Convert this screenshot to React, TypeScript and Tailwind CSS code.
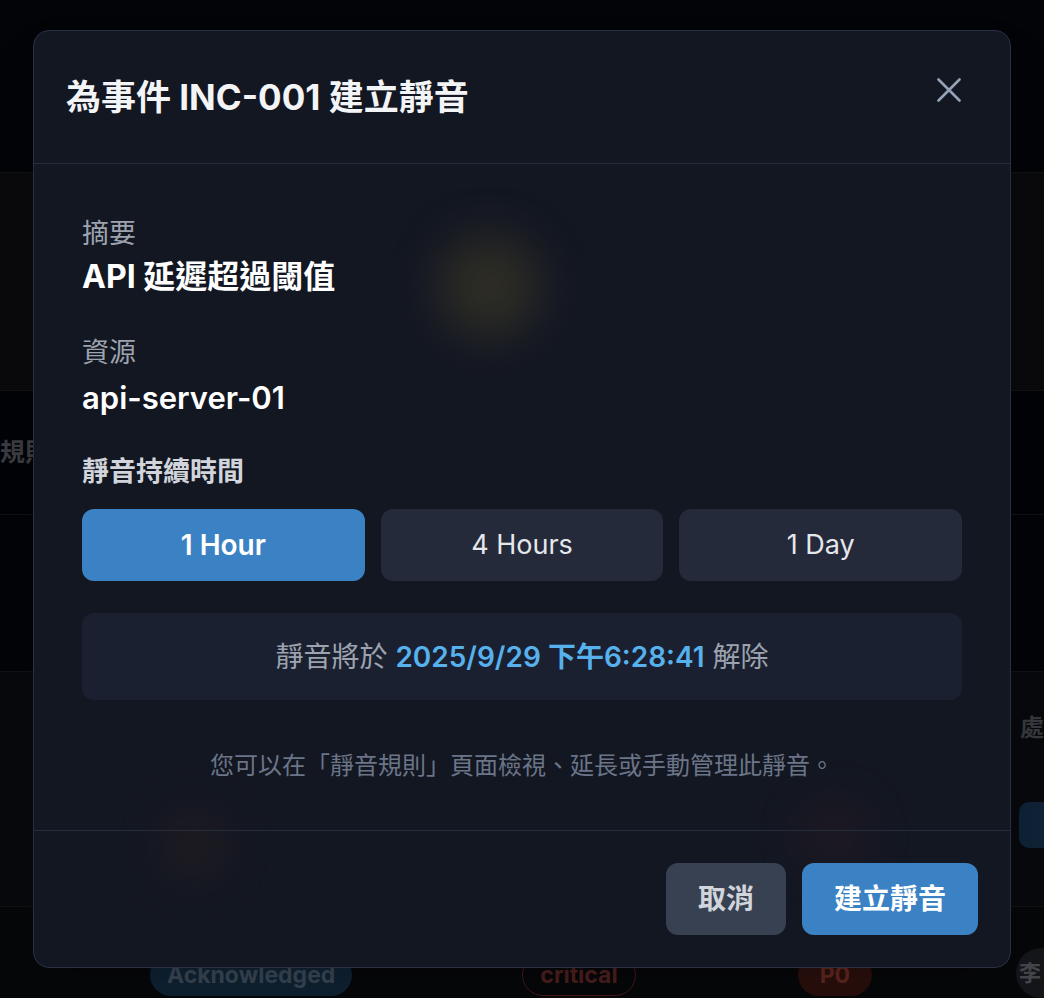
import { useState } from 'react';

const FONT = { fontFamily: 'Inter, "Noto Sans CJK TC", "Noto Sans", sans-serif' };

const DURATIONS = ['1 Hour', '4 Hours', '1 Day'];

function CloseIcon() {
  return (
    <svg width="24" height="24" viewBox="0 0 24 24" fill="none" aria-hidden>
      <path d="M1.5 1.5L22.5 22.5M22.5 1.5L1.5 22.5" stroke="#94a3b8" strokeWidth="2.6" strokeLinecap="round" />
    </svg>
  );
}

// faded table sitting behind the dialog
function BackdropPage() {
  return (
    <div className="flex h-full flex-col">
      <div className="h-[172px] bg-[#030408]" />
      <div className="h-[218px] border-t border-[#111216] bg-[#0a0a0d]" />
      <div className="flex h-[125px] items-center border-t border-[#111216] bg-[#020306]">
        <span className="text-[25px] font-bold text-[#3a3c41]">規則</span>
      </div>
      <div className="h-[157px] border-t border-[#111216] bg-[#030408]" />
      <div className="flex h-[235px] flex-col items-end border-t border-[#111216] bg-[#08090c]">
        <span className="mt-[38px] text-[24px] font-bold text-[#36383d]">處</span>
        <div className="mt-[56px] h-[46px] w-[25px] rounded-l-[10px] bg-[#0f2236]" />
      </div>
      <div className="flex flex-1 items-start border-t border-[#111216] bg-[#060709] pt-[47px]">
        <span className="ml-[150px] rounded-full bg-[#0f2233] px-[17px] py-[4px] text-[23px] leading-[34px] font-bold text-[#3a4756]">
          Acknowledged
        </span>
        <span className="ml-[170px] rounded-full border border-[#45191a] px-[17px] py-[3px] text-[23px] leading-[34px] font-bold text-[#4e1f1e]">
          critical
        </span>
        <span className="ml-[162px] rounded-full bg-[#2a0f0c] px-[22px] py-[4px] text-[23px] leading-[34px] font-bold text-[#62271f]">
          P0
        </span>
        <span className="-mt-[6px] ml-auto -mr-[22px] flex h-[50px] w-[50px] items-center justify-center rounded-full bg-[#15161a] pr-[22px] text-[22px] font-bold text-[#45464b]">
          李
        </span>
      </div>
    </div>
  );
}

export default function App() {
  const [duration, setDuration] = useState('1 Hour');

  return (
    <div className="relative h-[998px] w-full overflow-hidden bg-[#030408]" style={FONT}>
      <BackdropPage />

      <div className="absolute inset-0 flex items-center justify-center">
        <div className="relative w-[978px] overflow-hidden rounded-2xl border border-[#283042] bg-[#131722] shadow-2xl">
          {/* blurred glows from the page behind */}
          <div className="pointer-events-none absolute top-[205px] left-[405px] h-[100px] w-[100px] rounded-full bg-[#4a4428] opacity-50 blur-xl" />
          <div className="pointer-events-none absolute top-[785px] left-[130px] h-[60px] w-[60px] rounded-full bg-[#3a2620] opacity-40 blur-xl" />
          <div className="pointer-events-none absolute top-[775px] left-[770px] h-[60px] w-[60px] rounded-full bg-[#3a1e22] opacity-40 blur-xl" />

          <div className="relative flex items-start justify-between border-b border-[#262d3b] px-8 pt-[44px] pb-[44px]">
            <h2 className="text-[35px] leading-[44px] font-bold text-[#f3f4f6]">為事件 INC-001 建立靜音</h2>
            <button className="-mt-[1px] mr-[13px] p-1" aria-label="close">
              <CloseIcon />
            </button>
          </div>

          <div className="relative px-12 pt-[52px] pb-[48px]">
            <div className="text-[27px] leading-[36px] text-[#9ca3af]">摘要</div>
            <div className="mt-[5px] text-[32px] leading-[40px] font-bold text-white">API 延遲超過閾值</div>

            <div className="mt-[38px] text-[27px] leading-[36px] text-[#9ca3af]">資源</div>
            <div className="mt-[7px] text-[31px] leading-[40px] font-semibold text-white">api-server-01</div>

            <div className="mt-[36px] text-[27px] leading-[36px] font-semibold text-[#d1d5db]">靜音持續時間</div>
            <div className="mt-[19px] grid grid-cols-3 gap-4">
              {DURATIONS.map((d) => (
                <button
                  key={d}
                  onClick={() => setDuration(d)}
                  className={
                    d === duration
                      ? 'h-[72px] rounded-xl bg-[#3b82c4] text-[28px] font-semibold text-white'
                      : 'h-[72px] rounded-xl bg-[#242a3a] text-[27px] font-normal text-[#e5e7eb]'
                  }
                >
                  {d}
                </button>
              ))}
            </div>

            <div className="mt-8 flex h-[87px] items-center justify-center rounded-xl bg-[#1b2030] text-[28px] text-[#9ca3af]">
              靜音將於&nbsp;<span className="font-semibold text-[#56b1ec]">2025/9/29 下午6:28:41</span>&nbsp;解除
            </div>

            <p className="mt-[50px] text-center text-[24px] leading-[32px] text-[#6b7587]">
              您可以在「靜音規則」頁面檢視、延長或手動管理此靜音。
            </p>
          </div>

          <div className="relative flex justify-end gap-4 border-t border-[#262d3b] px-8 py-8">
            <button className="h-[72px] w-[120px] rounded-xl bg-[#374151] text-[28px] font-bold text-[#d1d5db]">取消</button>
            <button className="h-[72px] w-[176px] rounded-xl bg-[#3b82c4] text-[28px] font-bold text-white">建立靜音</button>
          </div>
        </div>
      </div>
    </div>
  );
}
